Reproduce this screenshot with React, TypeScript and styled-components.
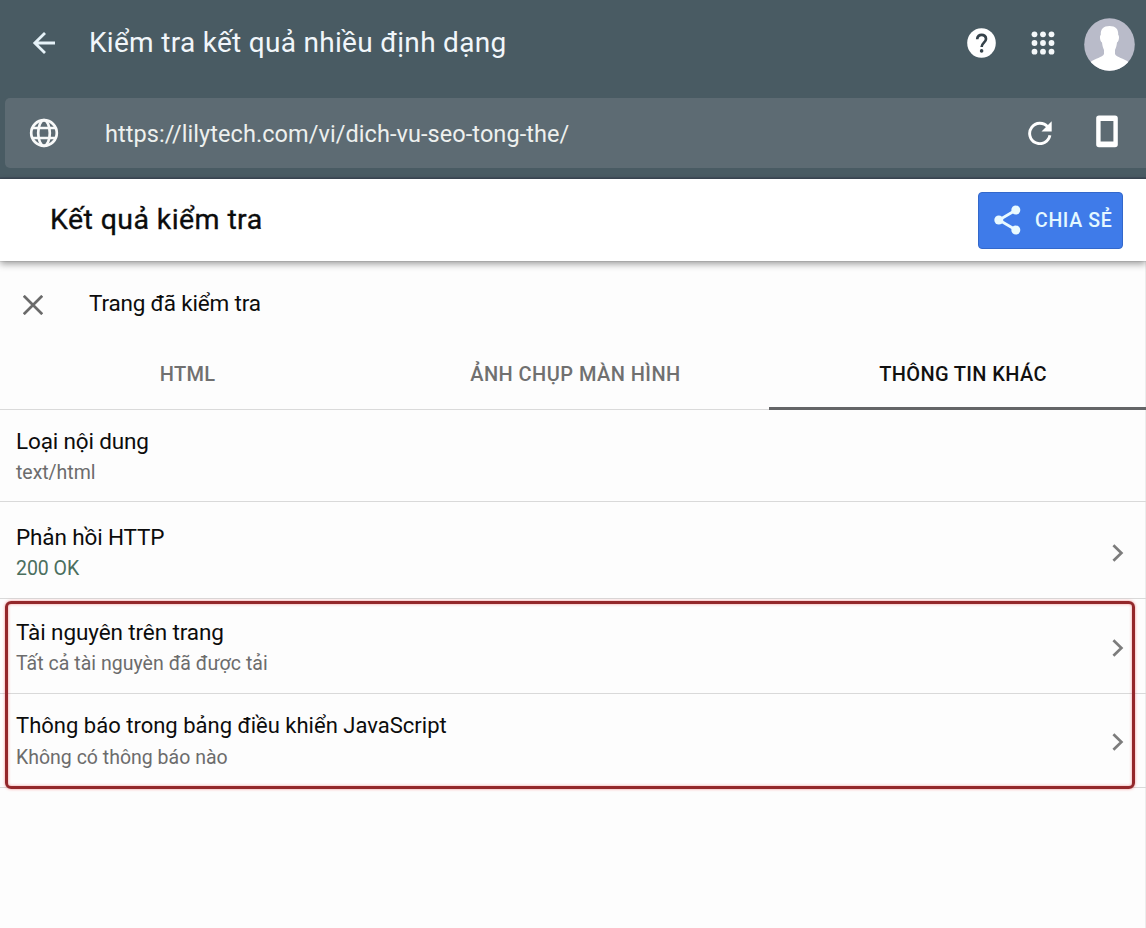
import React from 'react';
import styled, { createGlobalStyle } from 'styled-components';

const GlobalStyle = createGlobalStyle`
  * { box-sizing: border-box; }
  body {
    margin: 0;
    background: #fdfdfd;
    font-family: Roboto, "Liberation Sans", sans-serif;
    color: #0c0c0c;
  }
  svg { display: block; flex: none; }
  button { font-family: inherit; }
`;

const Page = styled.div`
  display: flex;
  flex-direction: column;
  min-height: 928px;
  overflow: hidden;
`;

const Header = styled.header`
  height: 179px;
  padding-left: 5px;
  background: #495b63;
  border-bottom: 2px solid #414e5b;
`;

const TitleBar = styled.div`
  display: flex;
  align-items: center;
  height: 98px;
  padding: 0 11px 10px 27px;
`;

const BackIcon = styled.svg`
  margin-bottom: 3px;
`;

const AppTitle = styled.h1`
  flex: 1;
  margin: 0 0 3px 32px;
  font-size: 28px;
  font-weight: 400;
  line-height: 36px;
  letter-spacing: 0.3px;
  color: #f1f6fa;
`;

const HeaderActions = styled.div`
  display: flex;
  align-items: center;
`;

const HelpIcon = styled.svg`
  margin: 0 35px 2px 0;
`;

const AppsIcon = styled.svg`
  margin: 0 29px 3px 0;
`;

const UrlBar = styled.div`
  display: flex;
  align-items: center;
  height: 70px;
  padding: 0 28px 0 24px;
  border-radius: 5px 0 0 5px;
  background: #5d6b73;
`;

const Url = styled.span`
  flex: 1;
  margin: 1px 0 0 46px;
  font-size: 23.5px;
  line-height: 30px;
  letter-spacing: 0.07px;
  color: #edf0ee;
`;

const PhoneIcon = styled.svg`
  margin: -4px 0 0 44px;
`;

const Main = styled.main`
  flex: 1;
  border-right: 1px solid #ececec;
`;

const ResultBar = styled.section`
  display: flex;
  align-items: center;
  justify-content: space-between;
  height: 82px;
  padding: 0 23px 0 50px;
  margin-right: -1px;
  background: #fff;
  box-shadow: 0 0 1px rgba(0, 0, 0, 0.4), 0 3px 7px rgba(0, 0, 0, 0.38);
`;

const ResultTitle = styled.h2`
  margin: 0;
  font-size: 28.5px;
  font-weight: 400;
  line-height: 36px;
  letter-spacing: 0.41px;
  -webkit-text-stroke: 0.35px currentColor;
`;

const ShareButton = styled.button`
  display: flex;
  align-items: center;
  gap: 14px;
  width: 145px;
  height: 57px;
  padding: 0 0 0 15px;
  border: 1px solid #3368cb;
  border-radius: 4px;
  background: #3f7be9;
  color: #e4f8ff;
  font-size: 19.5px;
  font-weight: 500;
  letter-spacing: 0.65px;
  white-space: nowrap;
`;

const PanelHeader = styled.div`
  display: flex;
  align-items: center;
  height: 85px;
  padding: 3px 0 0 23px;
`;

const PanelTitle = styled.h3`
  margin: 0 0 4px 46px;
  font-size: 22.5px;
  font-weight: 400;
  line-height: 30px;
  letter-spacing: -0.18px;
`;

const Tabs = styled.div`
  display: grid;
  grid-template-columns: 375px 394px 1fr;
  height: 64px;
  margin-right: -1px;
  border-bottom: 1px solid #dadada;
`;

const Tab = styled.div<{ $active?: boolean; $spacing: number; $shift?: number }>`
  display: flex;
  align-items: center;
  justify-content: center;
  height: 64px;
  padding-bottom: ${(p) => (p.$active ? 6 : 9)}px;
  padding-left: ${(p) => p.$shift ?? 0}px;
  border-bottom: ${(p) => (p.$active ? '3px solid #646567' : 'none')};
  color: ${(p) => (p.$active ? '#111' : '#707070')};
  font-size: 20px;
  font-weight: 500;
  letter-spacing: ${(p) => p.$spacing}px;
`;

const List = styled.div`
  position: relative;
  margin-right: -1px;
`;

const Row = styled.div<{ $height: number; $top: number }>`
  display: flex;
  justify-content: space-between;
  height: ${(p) => p.$height}px;
  padding: ${(p) => p.$top}px 22px 0 16px;
  border-bottom: 1px solid #d9d9d9;
`;

const RowTitle = styled.div<{ $size?: number; $spacing?: number }>`
  height: 30px;
  font-size: ${(p) => p.$size ?? 22.5}px;
  line-height: 30px;
  letter-spacing: ${(p) => p.$spacing ?? 0}px;
`;

const RowDetail = styled.div<{ $ok?: boolean; $spacing?: number }>`
  font-size: 19.5px;
  line-height: 34px;
  letter-spacing: ${(p) => p.$spacing ?? 0}px;
  color: ${(p) => (p.$ok ? '#4b6f5e' : '#6c6c6c')};
`;

const RowArrow = styled.svg`
  margin-top: 22px;
`;

const Highlight = styled.div`
  position: absolute;
  top: 191px;
  left: 5px;
  width: 1130px;
  height: 188px;
  border: 3px solid #93282b;
  border-radius: 6px;
  box-shadow: 0 0 3px rgba(235, 50, 50, 0.55), inset 0 0 3px rgba(235, 50, 50, 0.5);
  pointer-events: none;
`;

const Chevron = () => (
  <RowArrow width="12" height="18" viewBox="0 0 12 18" fill="none" stroke="#7c7c7c" strokeWidth="2.7">
    <path d="M1.4 1.2 9.4 9l-8 7.8" />
  </RowArrow>
);

const rows = [
  { title: 'Loại nội dung', detail: 'text/html', height: 92, top: 16, spacing: -0.15, detailSpacing: -0.04 },
  { title: 'Phản hồi HTTP', detail: '200 OK', height: 97, top: 20, spacing: -0.13, detailSpacing: -0.05, ok: true, arrow: true },
  { title: 'Tài nguyên trên trang', detail: 'Tất cả tài nguyèn đã được tải', height: 95, top: 18, spacing: -0.1, detailSpacing: 0.03, arrow: true },
  { title: 'Thông báo trong bảng điều khiển JavaScript', detail: 'Không có thông báo nào', height: 94, top: 17, size: 22, spacing: 0.01, arrow: true },
];

export default function App() {
  return (
    <Page>
      <GlobalStyle />
      <Header>
        <TitleBar>
          <BackIcon width="25" height="24" viewBox="0 0 25 24" fill="none" stroke="#e6f2f8" strokeWidth="2.8">
            <path d="M23 12H3M13 2 2.8 12 13 22" />
          </BackIcon>
          <AppTitle>Kiểm tra kết quả nhiều định dạng</AppTitle>
          <HeaderActions>
            <HelpIcon width="29" height="30" viewBox="0 0 29 30">
              <ellipse cx="14.5" cy="15" rx="14.3" ry="14.8" fill="#fff" />
              <path d="M10.2 11.2c0-6 9-5.7 8.8-.2-.1 3.5-4.4 3.9-4.4 8.1" fill="none" stroke="#35424a" strokeWidth="2.7" />
              <circle cx="14.6" cy="22.9" r="1.8" fill="#35424a" />
            </HelpIcon>
            <AppsIcon width="24" height="24" viewBox="0 0 24 24" fill="#f4f8fa">
              {[3.3, 12, 20.7].map((y) =>
                [3.5, 12, 20.5].map((x) => <circle key={`${x}-${y}`} cx={x} cy={y} r="2.9" />),
              )}
            </AppsIcon>
            <svg width="51" height="53" viewBox="0 0 51 53">
              <defs>
                <clipPath id="avatar">
                  <ellipse cx="25.5" cy="26.5" rx="25.3" ry="26.3" />
                </clipPath>
              </defs>
              <g clipPath="url(#avatar)">
                <rect width="51" height="53" fill="#b9bbc9" />
                <path
                  d="M16.8 17C16.5 11.5 19 8 25.5 8S34.5 11.5 34.2 17c1.5.8.8 6.4-1.2 7.5-.4 3.5-1.200 5.800-2 7.500V36c1.500 3.400 9 4.500 13.500 8L48 56H3L6.500 44C11 40.500 18.500 39.400 20 36V32c-.8-1.700-1.600-4-2-7.500-2-1.100-2.700-6.700-1.200-7.500z"
                  fill="#fff"
                />
              </g>
            </svg>
          </HeaderActions>
        </TitleBar>
        <UrlBar>
          <svg width="30" height="30" viewBox="0 0 30 30" fill="none" stroke="#f8f9f9" strokeWidth="2.7">
            <circle cx="15" cy="15" r="12.8" />
            <ellipse cx="15" cy="15" rx="5.8" ry="12.8" />
            <path d="M3.2 10h23.6M3.2 20h23.6" />
          </svg>
          <Url>https://lilytech.com/vi/dich-vu-seo-tong-the/</Url>
          <svg width="24" height="24" viewBox="0 0 24 24">
            <path d="M19.7 5.9A10.2 10.2 0 1 0 21.9 14.3" fill="none" stroke="#fff" strokeWidth="2.9" />
            <path d="M23.7.2v10.2h-10.2z" fill="#fff" />
          </svg>
          <PhoneIcon width="22" height="33" viewBox="0 0 22 33">
            <path
              fillRule="evenodd"
              d="M3 .5h16a2.8 2.8 0 0 1 2.8 2.8v26.2a2.8 2.8 0 0 1-2.8 2.8H3a2.8 2.8 0 0 1-2.8-2.8V3.3A2.8 2.8 0 0 1 3 .5zM4.6 6v20.5h12.8V6z"
              fill="#fff"
            />
          </PhoneIcon>
        </UrlBar>
      </Header>

      <Main>
        <ResultBar>
          <ResultTitle>Kết quả kiểm tra</ResultTitle>
          <ShareButton>
            <svg width="27" height="30" viewBox="0 0 27 30" fill="#e9faff">
              <path d="M22 5 5 15l17 10" fill="none" stroke="#e9faff" strokeWidth="2.8" />
              <circle cx="21.8" cy="5" r="4.5" />
              <circle cx="4.8" cy="15" r="4.5" />
              <circle cx="21.8" cy="25" r="4.5" />
            </svg>
            CHIA SẺ
          </ShareButton>
        </ResultBar>

        <PanelHeader>
          <svg width="20" height="20" viewBox="0 0 20 20" stroke="#6a6a6a" strokeWidth="2.7">
            <path d="M.8.8l18.4 18.4M19.2.8.8 19.2" />
          </svg>
          <PanelTitle>Trang đã kiểm tra</PanelTitle>
        </PanelHeader>

        <Tabs>
          <Tab $spacing={0.33}>HTML</Tab>
          <Tab $spacing={0.44} $shift={7}>
            ẢNH CHỤP MÀN HÌNH
          </Tab>
          <Tab $spacing={0.36} $shift={11} $active>
            THÔNG TIN KHÁC
          </Tab>
        </Tabs>

        <List>
          {rows.map((row) => (
            <Row key={row.title} $height={row.height} $top={row.top}>
              <div>
                <RowTitle $size={row.size} $spacing={row.spacing}>
                  {row.title}
                </RowTitle>
                <RowDetail $ok={row.ok} $spacing={row.detailSpacing}>
                  {row.detail}
                </RowDetail>
              </div>
              {row.arrow && <Chevron />}
            </Row>
          ))}
          <Highlight />
        </List>
      </Main>
    </Page>
  );
}
